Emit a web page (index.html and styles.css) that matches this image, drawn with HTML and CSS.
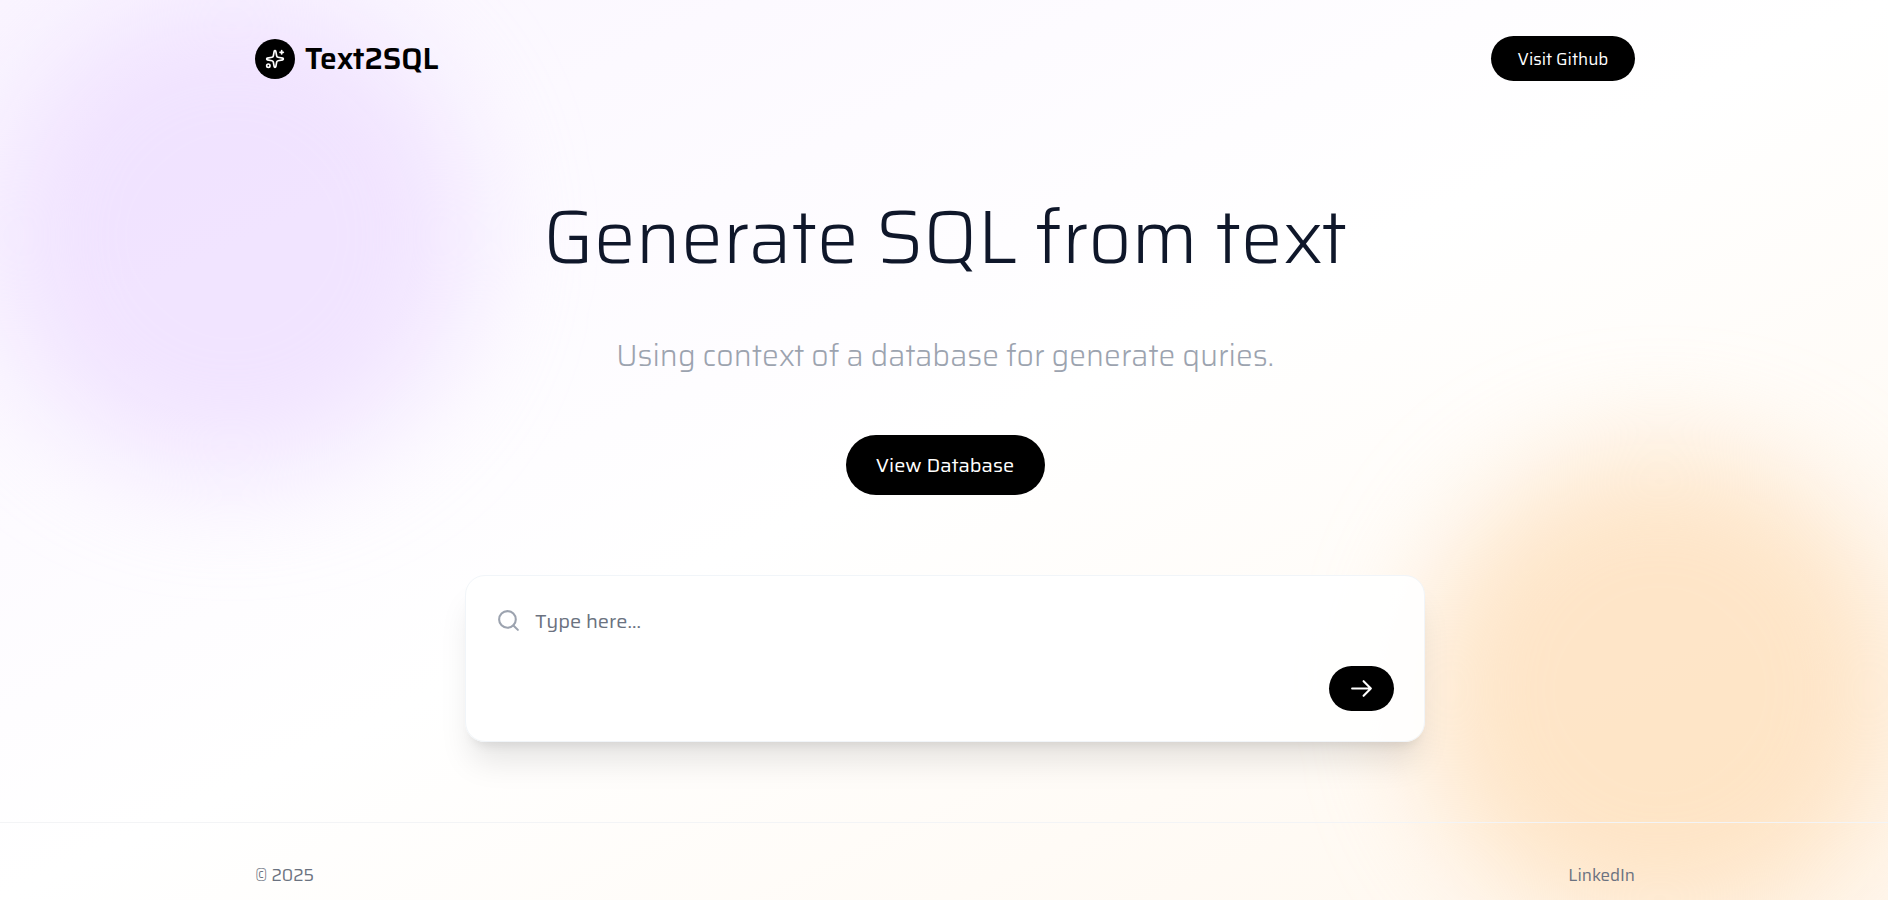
FILE: index.html
```html
<!DOCTYPE html>
<html lang="en">
<head>
<meta charset="utf-8">
<meta name="viewport" content="width=device-width, initial-scale=1">
<title>Text2SQL</title>
<link rel="stylesheet" href="styles.css">
</head>
<body>
<div class="page">
  <div class="glow glow-purple"></div>
  <div class="glow glow-orange"></div>
  <header class="header container">
    <a class="brand" href="#">
      <span class="brand-mark">
        <svg class="icon icon-small" viewBox="0 0 24 24" aria-hidden="true"><path d="M11.017 2.814a1 1 0 0 1 1.966 0l1.051 5.558a2 2 0 0 0 1.594 1.594l5.558 1.051a1 1 0 0 1 0 1.966l-5.558 1.051a2 2 0 0 0-1.594 1.594l-1.051 5.558a1 1 0 0 1-1.966 0l-1.051-5.558a2 2 0 0 0-1.594-1.594l-5.558-1.051a1 1 0 0 1 0-1.966l5.558-1.051a2 2 0 0 0 1.594-1.594z"/><path d="M20 2v4"/><path d="M22 4h-4"/><circle cx="4" cy="20" r="2"/></svg>
      </span>
      <span class="brand-name">Text2SQL</span>
    </a>
    <a class="button button-small" href="#">Visit Github</a>
  </header>
  <main class="hero">
    <h1 class="title">Generate SQL from text</h1>
    <p class="subtitle">Using context of a database for generate quries.</p>
    <button class="button button-large" type="button">View Database</button>
    <form class="prompt">
      <div class="prompt-row">
        <svg class="icon prompt-icon" viewBox="0 0 24 24" aria-hidden="true"><circle cx="11" cy="11" r="8"/><path d="m21 21-4.3-4.3"/></svg>
        <textarea class="prompt-input" rows="2" placeholder="Type here..." aria-label="Question"></textarea>
      </div>
      <button class="button button-send" type="button" aria-label="Send">
        <svg class="icon" viewBox="0 0 24 24" aria-hidden="true"><path d="M14 5 21 12m0 0-7 7M21 12H3"/></svg>
      </button>
    </form>
  </main>
  <footer class="footer">
    <div class="footer-inner container">
      <span>© 2025</span>
      <a class="footer-link" href="#">LinkedIn</a>
    </div>
  </footer>
</div>
</body>
</html>
```
FILE: styles.css
```css
*, *::before, *::after { box-sizing: border-box; }

body {
  margin: 0;
  font-family: Saira, "Open Sans", "Noto Sans", sans-serif;
  font-size: 17px;
  line-height: 24px;
  color: #000;
}

.page {
  position: relative;
  min-height: 100vh;
  display: flex;
  flex-direction: column;
  overflow: hidden;
  background: linear-gradient(to bottom right, #faf5ff, #fff 50%, #fff7ed);
}

.container {
  width: 100%;
  max-width: 1430px;
  margin: 0 auto;
  padding: 0 24px 0 26px;
}

.glow {
  position: absolute;
  border-radius: 50%;
  filter: blur(56px);
}

.glow-purple {
  top: -4px;
  left: -8px;
  width: 480px;
  height: 480px;
  background: rgba(233, 213, 255, 0.6);
}

.glow-orange {
  right: -12px;
  bottom: -30px;
  width: 480px;
  height: 480px;
  background: rgba(254, 215, 170, 0.6);
}

.header, .hero, .footer { position: relative; }

.header {
  display: flex;
  align-items: center;
  justify-content: space-between;
  margin-top: 36px;
}

.brand {
  display: flex;
  align-items: center;
  gap: 10px;
  color: #000;
  text-decoration: none;
}

.brand-mark {
  display: grid;
  place-items: center;
  width: 40px;
  height: 40px;
  border-radius: 50%;
  background: #000;
  color: #fff;
}

.brand-name {
  font-size: 30px;
  line-height: 40px;
  font-weight: 600;
}

.icon {
  display: block;
  width: 25px;
  height: 25px;
  fill: none;
  stroke: currentColor;
  stroke-width: 2;
  stroke-linecap: round;
  stroke-linejoin: round;
}

.icon-small { width: 20px; height: 20px; }

.button {
  display: flex;
  align-items: center;
  justify-content: center;
  border: 0;
  border-radius: 30px;
  background: #000;
  color: #fff;
  font-family: inherit;
  text-decoration: none;
  cursor: pointer;
}

.button-small { width: 144px; height: 45px; font-size: 17px; }
.button-large { width: 199px; height: 60px; font-size: 20px; }
.button-send { width: 65px; height: 45px; align-self: flex-end; }

.hero {
  display: flex;
  flex-direction: column;
  align-items: center;
  padding: 96px 24px 80px 26px;
  text-align: center;
}

.title {
  margin: 0;
  font-size: 75px;
  line-height: 120px;
  font-weight: 300;
  color: #0f172a;
}

.subtitle {
  margin: 35px 0 55px;
  font-size: 30px;
  line-height: 48px;
  font-weight: 300;
  color: #9ca3af;
}

.prompt {
  display: flex;
  flex-direction: column;
  width: 100%;
  max-width: 960px;
  margin-top: 80px;
  padding: 30px;
  border: 1px solid #f1f5f9;
  border-radius: 20px;
  background: rgba(255, 255, 255, 0.9);
  box-shadow: 0 25px 32px -6px rgba(0, 0, 0, 0.1), 0 10px 12px -8px rgba(0, 0, 0, 0.1);
}

.prompt-row {
  display: flex;
  gap: 14px;
}

.prompt-icon { color: #9ca3af; margin-top: 2px; }

.prompt-input {
  flex: 1;
  height: 60px;
  padding: 0;
  border: 0;
  outline: 0;
  resize: none;
  background: transparent;
  font-family: inherit;
  font-size: 20px;
  line-height: 30px;
  color: #0f172a;
}

.prompt-input::placeholder { color: #6b7280; opacity: 1; }

.footer { border-top: 1px solid #f3f4f6; }

.footer-inner {
  display: flex;
  justify-content: space-between;
  padding-top: 40px;
  padding-bottom: 12px;
  color: #6b7280;
}

.footer-link { color: inherit; text-decoration: none; }
```
